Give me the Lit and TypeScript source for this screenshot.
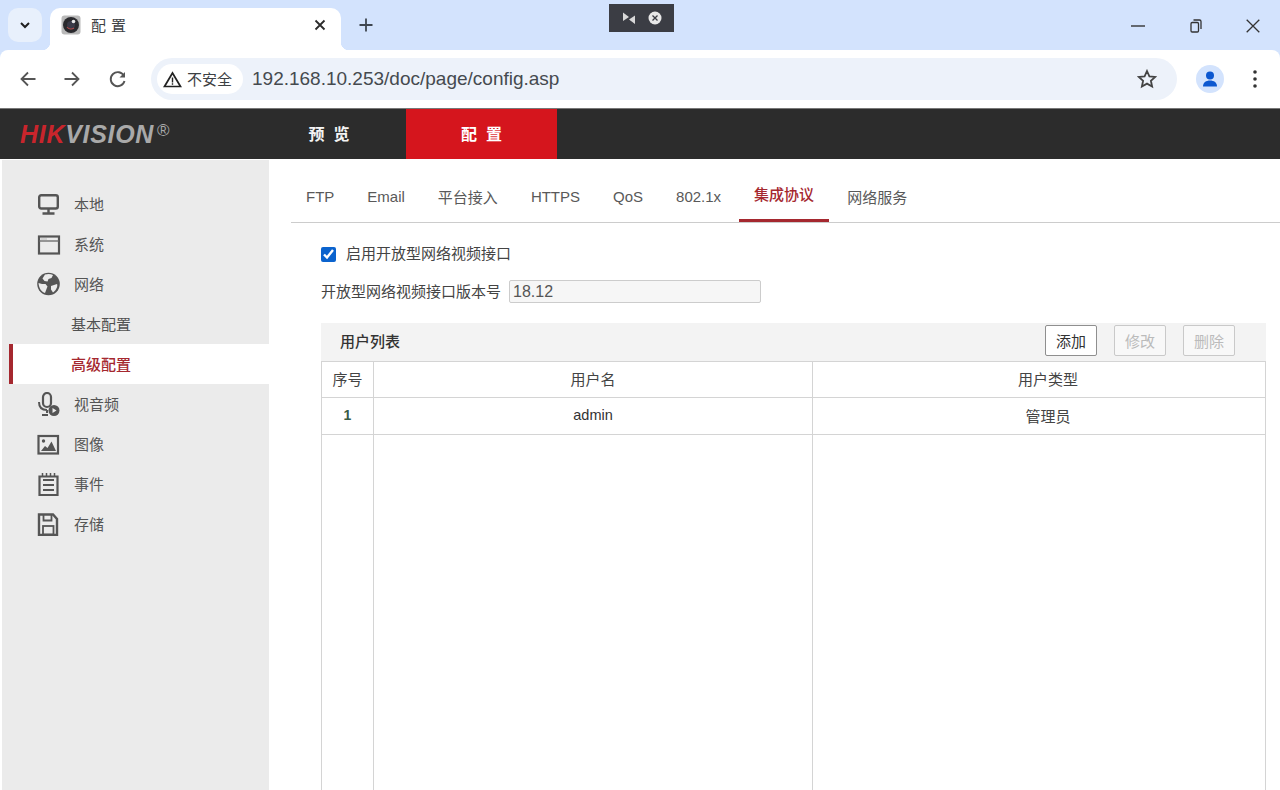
import { LitElement, html, css, svg } from "lit";
import { customElement } from "lit/decorators.js";

const menuIcons: Record<string, unknown> = {
  monitor: svg`<rect x="3.200" y="3.200" width="18.600" height="13.300" rx="2" fill="none" stroke="#555" stroke-width="2.400"/><path d="M12.500 16.500v4M6.500 21.500h12" stroke="#555" stroke-width="2.400" fill="none"/>`,
  system: svg`<rect x="3" y="4.500" width="20" height="17" fill="none" stroke="#555" stroke-width="2.200"/><path d="M3 9h20" stroke="#666" stroke-width="1.300"/><path d="M5.500 7h5" stroke="#888" stroke-width="1" stroke-dasharray="1 1"/>`,
  globe: svg`<circle cx="12.500" cy="12" r="11.300" fill="#555"/><path d="M9 2.500c3-1 6-.6 8 .5l-1.500 3-3 1-1 2.500-3-.5-2-2.500zM2.500 11l3.500 1 3.500 0 2 2.500-1 2.500-1.500 4c-3.500-1-6-4.500-6.500-10zM15 14l6-2c1 2-.5 6-4 8.500l-2-3z" fill="#ebebeb"/>`,
  av: svg`<rect x="7" y="1" width="8" height="14" rx="4" fill="none" stroke="#555" stroke-width="2.200"/><path d="M3 10c0 5 3 8 8 8M11 18v3M6 23h6" fill="none" stroke="#555" stroke-width="2"/><circle cx="18" cy="18.500" r="5.500" fill="#555"/><path d="M16.500 16l4 2.500-4 2.500z" fill="#ebebeb"/>`,
  image: svg`<rect x="2.500" y="4" width="19.500" height="17.500" fill="none" stroke="#555" stroke-width="2.200"/><circle cx="7.500" cy="9" r="1.700" fill="#555"/><path d="M5 19l4-5 2.500 2 4-6.500 4.500 9.500z" fill="#555"/>`,
  event: svg`<path d="M3.500 4.500h18V23h-18z" fill="none" stroke="#555" stroke-width="2.200"/><path d="M7 8h11M7 13h11M7 18h11" stroke="#555" stroke-width="2"/><path d="M6.500 1v4M10.500 1v4M14.500 1v4M18.500 1v4" stroke="#555" stroke-width="1.500"/>`,
  save: svg`<path d="M3 2.500h14l4 4.500v16H3z" fill="none" stroke="#555" stroke-width="2.400"/><path d="M7.500 3v5.500h8V3" fill="none" stroke="#555" stroke-width="1.800"/><rect x="7" y="14" width="10.500" height="8.500" fill="none" stroke="#555" stroke-width="1.800"/>`,
};

const menu = [
  { label: "本地", icon: "monitor" },
  { label: "系统", icon: "system" },
  { label: "网络", icon: "globe" },
  { label: "基本配置", sub: true },
  { label: "高级配置", sub: true, active: true },
  { label: "视音频", icon: "av" },
  { label: "图像", icon: "image" },
  { label: "事件", icon: "event" },
  { label: "存储", icon: "save" },
];

const tabs = ["FTP", "Email", "平台接入", "HTTPS", "QoS", "802.1x", "集成协议", "网络服务"];

@customElement("app-root")
export class AppRoot extends LitElement {
  static styles = css`
    :host {
      display: block;
      position: relative;
      width: 1280px;
      height: 790px;
      overflow: hidden;
      background: #fff;
      font-family: "Liberation Sans", "Noto Sans CJK SC", sans-serif;
      font-size: 15px;
      color: #555;
    }
    svg { display: block; flex: none; }

    .chrome { background: #d3e3fd; }
    .strip { display: flex; align-items: flex-end; height: 50px; box-sizing: border-box; padding-left: 8px; }
    .tab-menu {
      width: 34px; height: 34px; margin-bottom: 8px; border-radius: 10px; background: #e8f0fc;
      display: flex; align-items: center; justify-content: center;
    }
    .tab {
      position: relative; margin-left: 8px; width: 291px; height: 42px; box-sizing: border-box;
      background: #fff; border-radius: 10px 10px 0 0;
      display: flex; align-items: center; padding: 0 15px 8px 11px;
      color: #3c4043;
    }
    .tab::before, .tab::after {
      content: ""; position: absolute; bottom: 0; width: 8px; height: 8px;
    }
    .tab::before { left: -8px; background: radial-gradient(circle at 0 0, transparent 8px, #fff 8.500px); }
    .tab::after { right: -8px; background: radial-gradient(circle at 100% 0, transparent 8px, #fff 8.500px); }
    .favicon { width: 20px; height: 20px; }
    .tab-title { margin-left: 10px; font-size: 15px; letter-spacing: 5px; flex: 1; padding-bottom: 2px; }
    .new-tab { margin: 0 0 18px 18px; }
    .win { margin-left: auto; margin-right: -2px; display: flex; height: 100%; align-items: flex-start; }
    .win-btn { width: 57.500px; height: 52px; display: flex; align-items: center; justify-content: center; }

    .capture {
      position: absolute; left: 609px; top: 4px; width: 65px; height: 28px;
      background: #3b3d44; display: flex; align-items: center; justify-content: center; gap: 12px;
    }

    .toolbar {
      height: 59px; box-sizing: border-box; background: #fff; border-radius: 8px 8px 0 0;
      display: flex; align-items: center; padding-left: 17px; border-bottom: 1px solid #777;
    }
    .nav-ico { width: 22px; height: 22px; margin-right: 22px; }
    .nav-ico.mid { margin-right: 24px; }
    .omni {
      width: 1026px; height: 42px; box-sizing: border-box; border-radius: 21px; background: #edf2fa;
      display: flex; align-items: center; padding-left: 6px;
    }
    .chip {
      height: 30px; width: 86px; box-sizing: border-box; border-radius: 15px; background: #fff;
      display: flex; align-items: center; padding-left: 6px; gap: 5px; color: #3c4043; font-size: 15px;
    }
    .chip span { padding-bottom: 2px; }
    .url { margin-left: 9px; font-size: 19px; color: #454a4f; font-family: "Liberation Sans", sans-serif; flex: 1; }
    .star { margin-right: 20px; }
    .avatar {
      margin-left: 19px; width: 28px; height: 28px; border-radius: 50%; background: #d3e3fd;
      display: flex; align-items: center; justify-content: center;
    }
    .dots { margin-left: 29px; }

    .hk { height: 50px; box-sizing: border-box; background: #2c2c2c; display: flex; align-items: stretch; }
    .logo {
      width: 252px; box-sizing: border-box; padding-left: 20px; display: flex; align-items: center;
      font: italic bold 25px "Liberation Sans", sans-serif; letter-spacing: 0.700px;
    }
    .logo .red { color: #c9252c; }
    .logo .grey { color: #a9a9a9; }
    .logo sup { font: normal 17px "Liberation Sans", sans-serif; color: #a9a9a9; margin: -6px 0 0 3px; }
    .hk-item {
      width: 154px; display: flex; align-items: center; justify-content: center; padding-bottom: 2px; box-sizing: border-box;
      color: #f4f4f4; font-size: 16px; font-weight: 700; letter-spacing: 9px; text-indent: 9px;
    }
    .hk-item.on { width: 151px; background: #d5151d; color: #fff; }

    .body { display: flex; height: 631px; }
    .side { width: 267px; margin-left: 2px; background: #ebebeb; padding-top: 24px; margin-top: 1px; box-sizing: border-box; }
    .row { height: 40px; display: flex; align-items: center; padding-left: 34px; gap: 12px; }
    .row span { padding-bottom: 2px; }
    .row.sub { padding-left: 69px; gap: 0; color: #505050; }
    .row.active {
      margin-left: 7px; padding-left: 58px; border-left: 4px solid #a5282f; background: #fff;
      color: #a5282f; font-weight: 500;
    }

    .main { flex: 1; padding-left: 22px; display: flex; flex-direction: column; min-width: 0; }
    .tabs {
      margin-top: 12px; height: 52px; box-sizing: border-box; display: flex; gap: 3px;
      border-bottom: 1px solid #ccc;
    }
    .t { padding: 0 15px 1px; display: flex; align-items: center; height: 51px; box-sizing: border-box; color: #595959; }
    .t.on { color: #a5282f; border-bottom: 3px solid #a5282f; padding-bottom: 3px; font-weight: 500; }
    .form { padding: 19px 14px 0 30px; flex: 1; display: flex; flex-direction: column; min-height: 0; }
    .check { display: flex; align-items: center; gap: 10px; height: 24px; color: #444; }
    .check span { padding-bottom: 3px; }
    .check input { width: 15px; height: 15px; margin: 0; accent-color: #0b63ce; }
    .ver { margin-top: 14px; display: flex; align-items: center; gap: 8px; height: 22px; color: #444; }
    .ver span { padding-bottom: 1px; }
    .ver input {
      width: 252px; height: 23px; box-sizing: border-box; border: 1px solid #ccc; border-radius: 2px; background: #f6f6f6;
      font: 16px "Liberation Sans", sans-serif; color: #555; padding: 1px 3px 0; outline: none;
    }
    .panel { margin-top: 21px; flex: 1; display: flex; flex-direction: column; min-height: 0; }
    .bar {
      height: 38px; box-sizing: border-box; background: #f3f3f3; display: flex; align-items: center;
      padding: 0 31px 3px 19px; gap: 17px;
    }
    .bar b { flex: 1; font-size: 15px; font-weight: 500; color: #333; }
    .btn {
      width: 52px; height: 31px; box-sizing: border-box; border: 1px solid #8f8f8f; border-radius: 2px; background: #fff;
      color: #333; font-size: 15px; font-family: inherit; padding: 0;
    }
    .btn:disabled { border-color: #c9c9c9; color: #bbb; background: #f8f8f8; }
    .grid {
      flex: 1; display: grid; grid-template-columns: 52px 439px 1fr; grid-template-rows: 36px 37px 1fr;
      border: 1px solid #d4d4d4; border-bottom: none;
    }
    .c {
      display: flex; align-items: center; justify-content: center; color: #444; padding-bottom: 2px; box-sizing: border-box;
      border-right: 1px solid #d4d4d4; border-bottom: 1px solid #d4d4d4;
    }
    .c.last { border-right: none; padding-left: 18px; }
    .c.fill { border-bottom: none; }
    .c.num { color: #3a5a45; font-size: 14px; font-weight: 700; }
    .c.name { font-size: 14.500px; color: #333; }
  `;

  render() {
    return html`
      <div class="chrome">
        <div class="strip">
          <div class="tab-menu">
            <svg width="12" height="8" viewBox="0 0 12 8"><path d="M2 2l4 4 4-4" fill="none" stroke="#1f1f1f" stroke-width="2"/></svg>
          </div>
          <div class="tab">
            <svg class="favicon" viewBox="0 0 20 20">
              <rect x="0.500" y="0.500" width="19" height="19" rx="3" fill="#b9b9b9"/>
              <circle cx="10" cy="10" r="8" fill="#2a2a2e"/>
              <circle cx="10" cy="10" r="4" fill="#3a3a48"/>
              <path d="M6 12a5 5 0 0 0 7 1" stroke="#b34a4a" stroke-width="1.100" fill="none"/>
              <circle cx="12.500" cy="6.500" r="1.800" fill="#e8e8e8"/>
            </svg>
            <span class="tab-title">配置</span>
            <svg width="12" height="12" viewBox="0 0 12 12"><path d="M1.500 1.500l9 9M10.500 1.500l-9 9" stroke="#2b2b2b" stroke-width="1.800"/></svg>
          </div>
          <svg class="new-tab" width="14" height="14" viewBox="0 0 14 14"><path d="M7 0.500v13M0.500 7h13" stroke="#3f4650" stroke-width="1.800"/></svg>
          <div class="win">
            <div class="win-btn"><svg width="14" height="2" viewBox="0 0 14 2"><path d="M0 1h14" stroke="#333" stroke-width="1.400"/></svg></div>
            <div class="win-btn"><svg width="12" height="14" viewBox="0 0 12 14"><rect x="1" y="3.500" width="7.500" height="9.500" rx="1.200" fill="none" stroke="#333" stroke-width="1.300"/><path d="M3.500 1h6a1.500 1.500 0 0 1 1.500 1.500V10" fill="none" stroke="#333" stroke-width="1.300"/></svg></div>
            <div class="win-btn"><svg width="14" height="14" viewBox="0 0 14 14"><path d="M.700.700l12.600 12.600M13.300.700L.700 13.300" stroke="#333" stroke-width="1.300"/></svg></div>
          </div>
        </div>
        <div class="toolbar">
          <svg class="nav-ico" viewBox="0 0 22 22"><path d="M18.500 11H4.500M11 4.500L4.500 11l6.500 6.500" fill="none" stroke="#555" stroke-width="1.800"/></svg>
          <svg class="nav-ico mid" viewBox="0 0 22 22"><path d="M3.500 11h14M11 4.500l6.500 6.500-6.500 6.500" fill="none" stroke="#555" stroke-width="1.800"/></svg>
          <svg class="nav-ico" viewBox="0 0 22 22"><path d="M17 8a7 7 0 1 0 .5 5" fill="none" stroke="#555" stroke-width="1.900"/><path d="M18 4v5.500h-5.500z" fill="#555"/></svg>
          <div class="omni">
            <div class="chip">
              <svg width="19" height="17" viewBox="0 0 19 17"><path d="M9.500 2L17.500 15.500H1.500z" fill="none" stroke="#222" stroke-width="1.700"/><path d="M9.500 6.500v5M9.500 12.300v1.400" stroke="#222" stroke-width="1.400"/></svg>
              <span>不安全</span>
            </div>
            <span class="url">192.168.10.253/doc/page/config.asp</span>
            <svg class="star" width="20" height="20" viewBox="0 0 20 20"><path d="M10 2l2.400 5.300 5.800.6-4.300 3.900 1.200 5.700L10 14.600l-5.100 2.900 1.200-5.700L1.800 7.900l5.800-.6z" fill="none" stroke="#444" stroke-width="1.800"/></svg>
          </div>
          <div class="avatar">
            <svg width="18" height="18" viewBox="0 0 18 18"><circle cx="9" cy="5.500" r="4" fill="#0b57d0"/><path d="M2 16.500c0-4 3-6 7-6s7 2 7 6z" fill="#0b57d0"/></svg>
          </div>
          <svg class="dots" width="4" height="18" viewBox="0 0 4 18"><circle cx="2" cy="2" r="1.800" fill="#333"/><circle cx="2" cy="9" r="1.800" fill="#333"/><circle cx="2" cy="16" r="1.800" fill="#333"/></svg>
        </div>
      </div>

      <div class="capture">
        <svg width="14" height="14" viewBox="0 0 14 14"><path d="M1 1.500l6 4.500-6 4zM13 13l-6-4.500 6-4z" fill="#d8d8d8"/></svg>
        <svg width="14" height="14" viewBox="0 0 14 14"><circle cx="7" cy="7" r="6.500" fill="#e8e8e8"/><path d="M4.500 4.500l5 5M9.500 4.500l-5 5" stroke="#3b3d44" stroke-width="1.300"/></svg>
      </div>

      <div class="hk">
        <div class="logo"><span class="red">HIK</span><span class="grey">VISION</span><sup>®</sup></div>
        <div class="hk-item">预览</div>
        <div class="hk-item on">配置</div>
      </div>

      <div class="body">
        <div class="side">
          ${menu.map(
            (m) => html`<div class="row ${m.sub ? "sub" : ""} ${m.active ? "active" : ""}">
              ${m.icon ? html`<svg width="26" height="24" viewBox="0 0 26 24">${menuIcons[m.icon]}</svg>` : ""}
              <span>${m.label}</span>
            </div>`
          )}
        </div>
        <div class="main">
          <div class="tabs">
            ${tabs.map((t) => html`<div class="t ${t === "集成协议" ? "on" : ""}">${t}</div>`)}
          </div>
          <div class="form">
            <label class="check"><input type="checkbox" checked /><span>启用开放型网络视频接口</span></label>
            <div class="ver"><span>开放型网络视频接口版本号</span><input value="18.12" /></div>
            <div class="panel">
              <div class="bar">
                <b>用户列表</b>
                <button class="btn">添加</button>
                <button class="btn" disabled>修改</button>
                <button class="btn" disabled>删除</button>
              </div>
              <div class="grid">
                <div class="c">序号</div><div class="c">用户名</div><div class="c last">用户类型</div>
                <div class="c num">1</div><div class="c name">admin</div><div class="c last">管理员</div>
                <div class="c fill"></div><div class="c fill"></div><div class="c fill last"></div>
              </div>
            </div>
          </div>
        </div>
      </div>
    `;
  }
}
